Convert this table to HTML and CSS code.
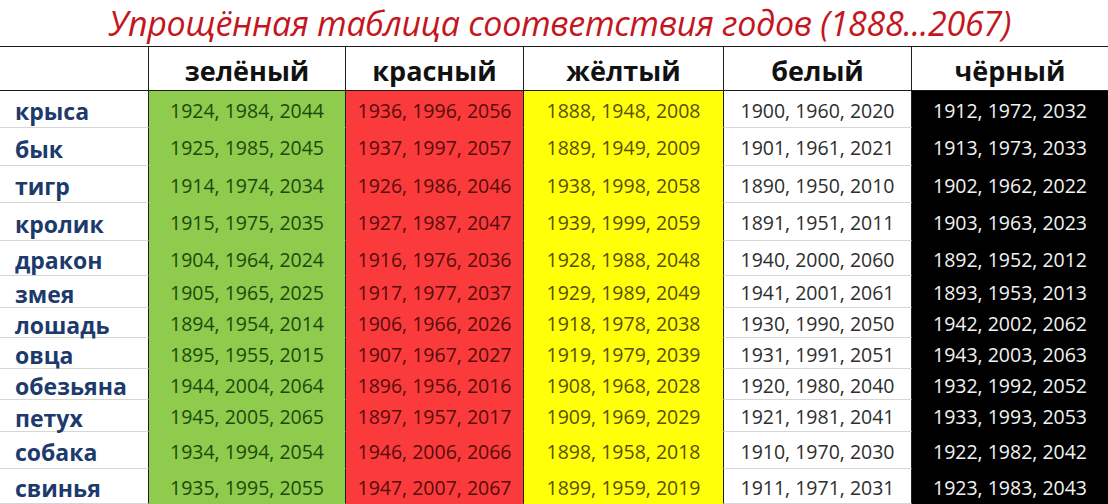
FILE: index.html
```html
<!DOCTYPE html>
<html lang="ru">
<head>
<meta charset="utf-8">
<title>Упрощённая таблица соответствия годов</title>
<link rel="stylesheet" href="styles.css">
</head>
<body>
<div class="page">
  <h1 class="title">Упрощённая таблица соответствия годов (1888...2067)</h1>
  <div class="grid">
    <div class="cell hd lab"></div>
    <div class="cell hd">зелёный</div>
    <div class="cell hd">красный</div>
    <div class="cell hd">жёлтый</div>
    <div class="cell hd">белый</div>
    <div class="cell hd last">чёрный</div>

    <div class="cell lab">крыса</div><div class="cell g">1924, 1984, 2044</div><div class="cell r">1936, 1996, 2056</div><div class="cell y">1888, 1948, 2008</div><div class="cell w">1900, 1960, 2020</div><div class="cell k">1912, 1972, 2032</div>
    <div class="cell lab">бык</div><div class="cell g">1925, 1985, 2045</div><div class="cell r">1937, 1997, 2057</div><div class="cell y">1889, 1949, 2009</div><div class="cell w">1901, 1961, 2021</div><div class="cell k">1913, 1973, 2033</div>
    <div class="cell lab">тигр</div><div class="cell g">1914, 1974, 2034</div><div class="cell r">1926, 1986, 2046</div><div class="cell y">1938, 1998, 2058</div><div class="cell w">1890, 1950, 2010</div><div class="cell k">1902, 1962, 2022</div>
    <div class="cell lab">кролик</div><div class="cell g">1915, 1975, 2035</div><div class="cell r">1927, 1987, 2047</div><div class="cell y">1939, 1999, 2059</div><div class="cell w">1891, 1951, 2011</div><div class="cell k">1903, 1963, 2023</div>
    <div class="cell lab">дракон</div><div class="cell g">1904, 1964, 2024</div><div class="cell r">1916, 1976, 2036</div><div class="cell y">1928, 1988, 2048</div><div class="cell w">1940, 2000, 2060</div><div class="cell k">1892, 1952, 2012</div>
    <div class="cell lab">змея</div><div class="cell g">1905, 1965, 2025</div><div class="cell r">1917, 1977, 2037</div><div class="cell y">1929, 1989, 2049</div><div class="cell w">1941, 2001, 2061</div><div class="cell k">1893, 1953, 2013</div>
    <div class="cell lab">лошадь</div><div class="cell g">1894, 1954, 2014</div><div class="cell r">1906, 1966, 2026</div><div class="cell y">1918, 1978, 2038</div><div class="cell w">1930, 1990, 2050</div><div class="cell k">1942, 2002, 2062</div>
    <div class="cell lab">овца</div><div class="cell g">1895, 1955, 2015</div><div class="cell r">1907, 1967, 2027</div><div class="cell y">1919, 1979, 2039</div><div class="cell w">1931, 1991, 2051</div><div class="cell k">1943, 2003, 2063</div>
    <div class="cell lab">обезьяна</div><div class="cell g">1944, 2004, 2064</div><div class="cell r">1896, 1956, 2016</div><div class="cell y">1908, 1968, 2028</div><div class="cell w">1920, 1980, 2040</div><div class="cell k">1932, 1992, 2052</div>
    <div class="cell lab">петух</div><div class="cell g">1945, 2005, 2065</div><div class="cell r">1897, 1957, 2017</div><div class="cell y">1909, 1969, 2029</div><div class="cell w">1921, 1981, 2041</div><div class="cell k">1933, 1993, 2053</div>
    <div class="cell lab">собака</div><div class="cell g">1934, 1994, 2054</div><div class="cell r">1946, 2006, 2066</div><div class="cell y">1898, 1958, 2018</div><div class="cell w">1910, 1970, 2030</div><div class="cell k">1922, 1982, 2042</div>
    <div class="cell lab">свинья</div><div class="cell g">1935, 1995, 2055</div><div class="cell r">1947, 2007, 2067</div><div class="cell y">1899, 1959, 2019</div><div class="cell w">1911, 1971, 2031</div><div class="cell k">1923, 1983, 2043</div>
  </div>
</div>
</body>
</html>
```

FILE: styles.css
```css
* { box-sizing: border-box; }
html, body {
  margin: 0;
  padding: 0;
  background: #fff;
  overflow: hidden;
}
body {
  font-family: "Open Sans", "Noto Sans", "DejaVu Sans", sans-serif;
  width: 1108px;
  height: 504px;
}
.page {
  width: 1108px;
  height: 504px;
  overflow: hidden;
}
.title {
  margin: 0;
  height: 46px;
  padding: 0 0 0 12px;
  font-size: 34px;
  line-height: 47px;
  font-style: italic;
  font-weight: 400;
  color: #c4161e;
  text-align: center;
  letter-spacing: -0.3px;
  white-space: nowrap;
}
.grid {
  display: grid;
  grid-template-columns: 149px 197px 178px 200px 188px 196px;
  grid-template-rows: 45px 37px 38px 37px 38px 35px 32px 30px 31px 31px 32px 37px 35px;
}
.cell {
  display: flex;
  align-items: center;
  justify-content: center;
  padding-top: 3px;
  font-size: 19.5px;
  line-height: 24px;
  white-space: nowrap;
  border-right: 1px solid #1e1e1e;
  border-bottom: 1px solid #d6d6d6;
}
.hd {
  border-top: 1.5px solid #1a1a1a;
  border-bottom: 1.5px solid #1a1a1a;
  font-size: 27px;
  font-weight: 700;
  color: #111;
  padding-top: 4px;
  line-height: 30px;
}
.hd.last, .k { border-right: none; }
.lab {
  justify-content: flex-start;
  padding-left: 15px;
  padding-top: 4px;
  font-size: 23px;
  font-weight: 700;
  color: #1d3a6c;
}
.hd.lab { padding-left: 0; }
.g { background: #8fcb4d; color: #1c4a0e; border-bottom-color: #8fcb4d; }
.r { background: #fb3b3b; color: #560c0c; border-bottom-color: #fb3b3b; }
.y { background: #ffff0a; color: #5a4f00; border-bottom-color: #ffff0a; }
.w { background: #fff; color: #2e2e2e; }
.k { background: #000; color: #f2f2f2; border-bottom-color: #000; }
```
